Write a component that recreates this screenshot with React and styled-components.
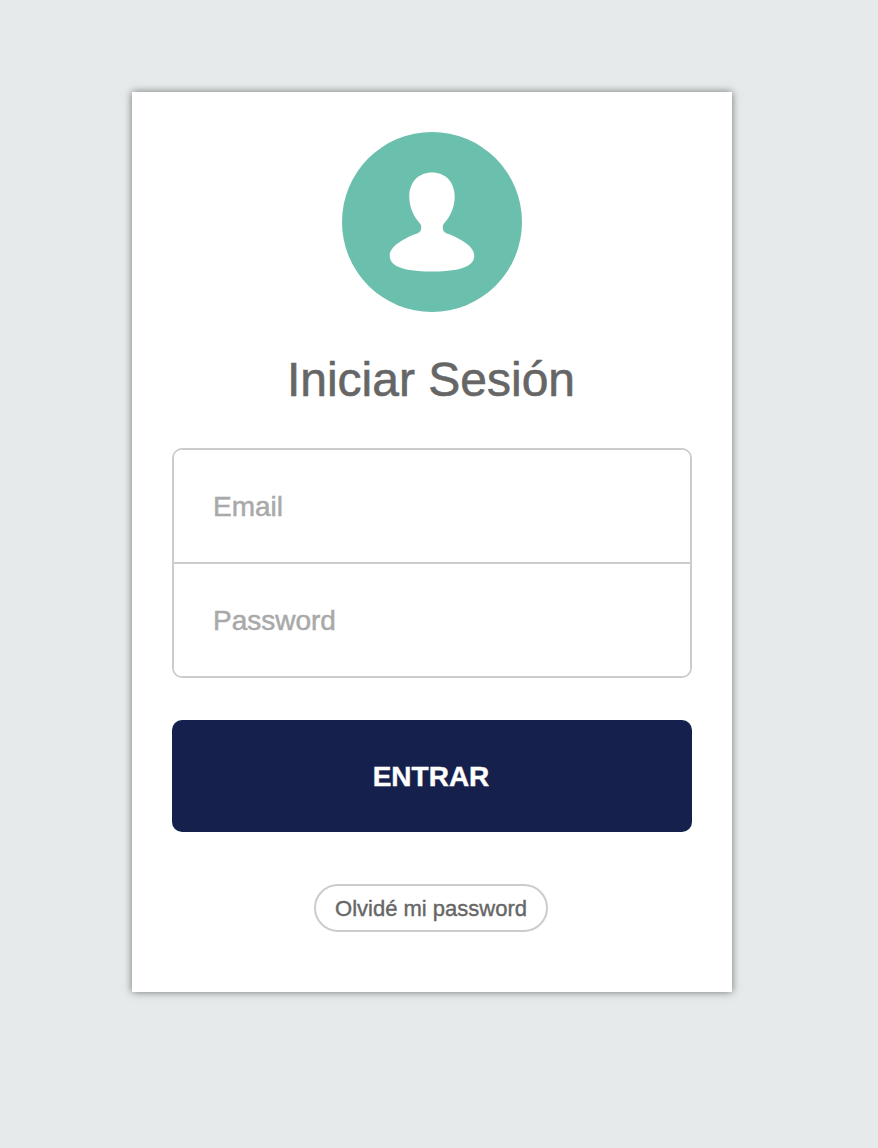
import React from "react";
import styled, { createGlobalStyle } from "styled-components";

const GlobalStyle = createGlobalStyle`
  *, *::before, *::after { box-sizing: border-box; }
  body {
    margin: 0;
    background: #e6eaeb;
    font-family: "Liberation Sans", Arial, sans-serif;
  }
`;

const Page = styled.main`
  min-height: 1148px;
  padding: 92px 146px 0 132px;
`;

const Card = styled.form`
  display: flex;
  flex-direction: column;
  align-items: center;
  width: 600px;
  height: 900px;
  padding: 40px;
  background: #fff;
  box-shadow: 0 0 8px rgba(0, 0, 0, 0.5);
`;

const Avatar = styled.svg`
  display: block;
  flex: none;
  width: 180px;
  height: 180px;
`;

const Title = styled.h1`
  margin: 40px 2px 40px 0;
  font-size: 48px;
  font-weight: 400;
  line-height: 56px;
  color: #666;
  -webkit-text-stroke: 0.6px #666;
  white-space: nowrap;
`;

const Fields = styled.div`
  width: 100%;
  border: 2px solid #ccc;
  border-radius: 10px;
  overflow: hidden;
`;

const Field = styled.input`
  display: block;
  width: 100%;
  height: 112px;
  padding: 2px 39px 0;
  border: 0;
  outline: 0;
  background: #fff;
  font: 28px "Liberation Sans", Arial, sans-serif;
  color: #666;

  & + & {
    height: 114px;
    border-top: 2px solid #ccc;
  }

  &::placeholder {
    color: #a9a9a9;
    -webkit-text-stroke: 0.5px #a9a9a9;
    opacity: 1;
  }
`;

const SubmitButton = styled.button`
  width: 100%;
  height: 112px;
  margin-top: 42px;
  padding: 1px 2px 0 0;
  border: 0;
  border-radius: 10px;
  background: #16204c;
  color: #fff;
  font: 700 28px "Liberation Sans", Arial, sans-serif;
  -webkit-text-stroke: 0.4px #fff;
`;

const ForgotLink = styled.a`
  width: 234px;
  height: 48px;
  margin: 52px 2px 0 0;
  padding-top: 1px;
  border: 2px solid #ccc;
  border-radius: 24px;
  color: #666;
  font-size: 22px;
  line-height: 44px;
  -webkit-text-stroke: 0.4px #666;
  text-align: center;
  text-decoration: none;
  white-space: nowrap;
`;

export default function App() {
  return (
    <>
      <GlobalStyle />
      <Page>
        <Card>
          <Avatar viewBox="0 0 180 180" aria-hidden="true">
            <circle cx="90" cy="90" r="90" fill="#6bbfad" />
            <path
              fill="#fff"
              d="M90 40.500C76.500 40.500 67.300 50 67.300 64.500C67.300 75 71.500 84.500 77.800 91.300C79.300 93 79.500 95 79 97.500C78.500 99.800 77 100.800 74.500 101.700C62 106 47.700 114.500 47.700 123.500C47.700 133 58 139.500 90 139.500C122 139.500 132.300 133 132.300 123.500C132.300 114.500 118 106 105.500 101.700C103 100.800 101.500 99.800 101 97.500C100.500 95 100.700 93 102.200 91.300C108.500 84.500 112.700 75 112.700 64.500C112.700 50 103.500 40.500 90 40.500Z"
            />
          </Avatar>
          <Title>Iniciar Sesión</Title>
          <Fields>
            <Field type="email" placeholder="Email" aria-label="Email" />
            <Field type="password" placeholder="Password" aria-label="Password" />
          </Fields>
          <SubmitButton type="button">ENTRAR</SubmitButton>
          <ForgotLink href="#">Olvidé mi password</ForgotLink>
        </Card>
      </Page>
    </>
  );
}
